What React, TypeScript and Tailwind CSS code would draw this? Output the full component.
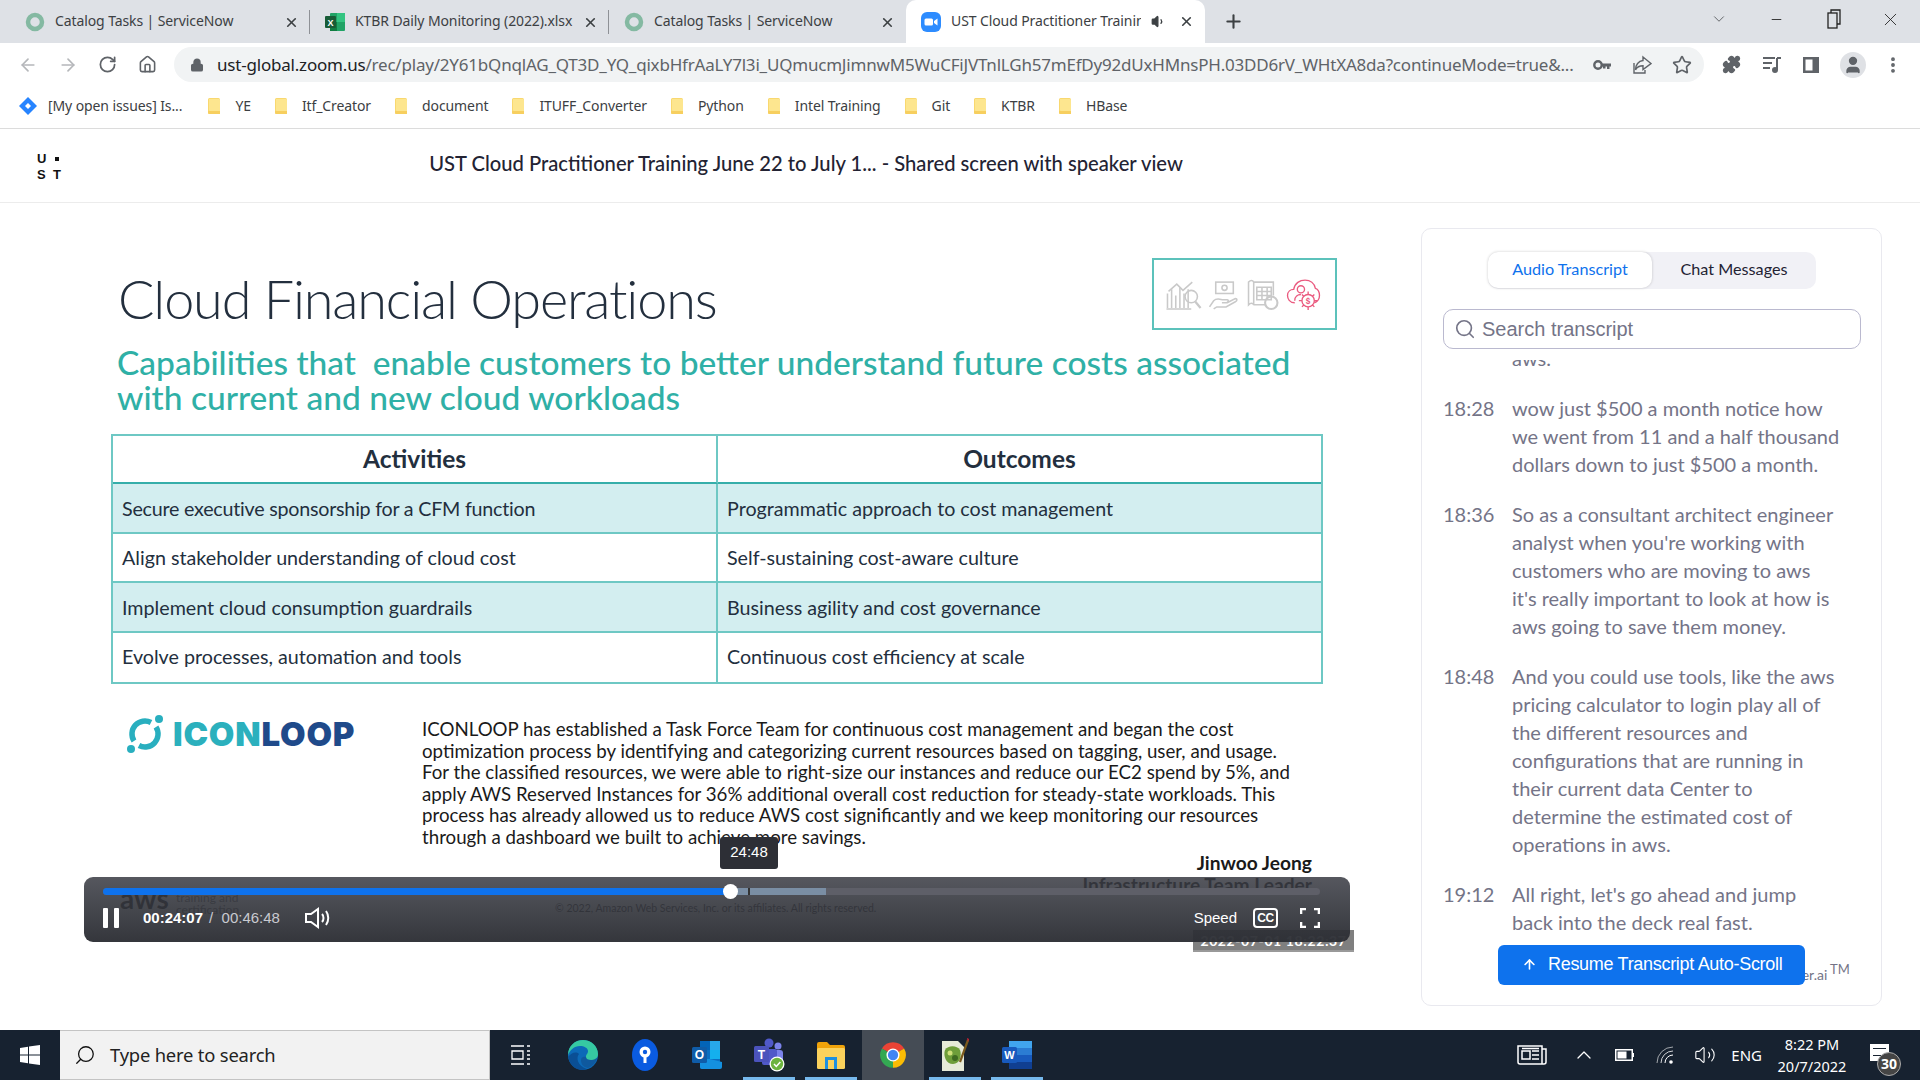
import React from "react";
import { ArrowLeft, ArrowRight, RotateCw, Home, Lock, Star, Puzzle, MoreVertical, X, Plus, ChevronDown, Minus, Volume1, Volume2, ChevronUp, Search, ArrowUp, User } from "lucide-react";

const Snow = () => (
  <svg width="20" height="20" viewBox="0 0 20 20" className="shrink-0">
    <circle cx="10" cy="10" r="7" fill="none" stroke="#84b9a2" strokeWidth="4.5" />
  </svg>
);
const Excel = () => (
  <svg width="20" height="20" viewBox="0 0 20 20" className="shrink-0">
    <rect x="5" y="1" width="15" height="18" rx="1" fill="#21a366" />
    <rect x="12" y="1" width="8" height="9" fill="#33c481" />
    <rect x="5" y="10" width="7" height="9" fill="#107c41" />
    <rect x="0" y="4" width="11" height="12" rx="1" fill="#185c37" />
    <text x="5.5" y="13.5" fontSize="9" fontWeight="700" fill="#fff" textAnchor="middle" fontFamily="Liberation Sans">X</text>
  </svg>
);
const ZoomFav = () => (
  <svg width="20" height="20" viewBox="0 0 20 20" className="shrink-0">
    <rect x="0" y="0" width="20" height="20" rx="6" fill="#2d8cff" />
    <rect x="3.5" y="6.5" width="8.5" height="7" rx="1.5" fill="#fff" />
    <path d="M13 9l3.5-2.5v7L13 11z" fill="#fff" />
  </svg>
);
const Tab = ({ w, icon, title, tw, active, sound, sep }: { w: string; icon: React.ReactNode; title: string; tw: string; active?: boolean; sound?: boolean; sep?: boolean }) => (
  <div className={`relative flex items-center shrink-0 pl-[15px] ${w} ${active ? "bg-white rounded-t-[10px] h-[43px]" : "h-[41px] mt-[1px]"}`}>
    {icon}
    <div className={`ml-[10px] pb-[1px] overflow-hidden whitespace-nowrap text-[14px] leading-[20px] text-[#3c4043] tracking-[-0.1px] ${tw}`}>{title}</div>
    {sound && <Volume1 size={15} className="absolute right-[39px] top-[14px] text-[#3c4043]" fill="#3c4043" />}
    <X size={15} strokeWidth={2.6} className="absolute right-[11px] top-[14px] text-[#3c4043]" />
    {sep && <div className="absolute right-0 top-[9px] h-[24px] w-px bg-[#8e9196]" />}
  </div>
);
const Folder = () => (
  <svg width="16" height="20" viewBox="0 0 16 20" className="shrink-0">
    <path d="M1 3.5A1.5 1.5 0 0 1 2.5 2h9A1.5 1.5 0 0 1 13 3.5V18H2.5A1.5 1.5 0 0 1 1 16.5z" fill="#f9d86f" />
    <path d="M2 3h10a1 1 0 0 1 1 1v11H3a1 1 0 0 1-1-1z" fill="#fde68f" />
    <path d="M1 15h12v3H2.500A1.500 1.500 0 0 1 1 16.500z" fill="#f7cf5f" />
  </svg>
);
const Bm = ({ t }: { t: string }) => (
  <div className="flex items-center gap-[12px] mr-[23px]">
    <Folder />
    <span className="text-[14px] leading-[20px] text-[#3c4043] tracking-[-0.1px] whitespace-nowrap">{t}</span>
  </div>
);
const iconGray = "text-[#5f6368]";

const Cell = ({ children, fill, tight, drop }: { children: string; fill?: boolean; tight?: boolean; drop?: boolean }) => (
  <div className={`flex items-center h-full pl-[9px] text-[19.700px] text-[#232f3e] whitespace-nowrap ${fill ? "bg-[#d3eef0]" : ""} ${tight ? "tracking-[-0.23px]" : ""} ${drop ? "pt-[2px]" : ""}`}>{children}</div>
);
const rows = [
  ["Secure executive sponsorship for a CFM function", "Programmatic approach to cost management"],
  ["Align stakeholder understanding of cloud cost", "Self-sustaining cost-aware culture"],
  ["Implement cloud consumption guardrails", "Business agility and cost governance"],
  ["Evolve processes, automation and tools", "Continuous cost efficiency at scale"],
];
const para = [
  "ICONLOOP has established a Task Force Team for continuous cost management and began the cost",
  "optimization process by identifying and categorizing current resources based on tagging, user, and usage.",
  "For the classified resources, we were able to right-size our instances and reduce our EC2 spend by 5%, and",
  "apply AWS Reserved Instances for 36% additional overall cost reduction for steady-state workloads. This",
  "process has already allowed us to reduce AWS cost significantly and we keep monitoring our resources",
  "through a dashboard we built to achieve more savings.",
];
const transcript: [string, string[]][] = [
  ["", ["aws."]],
  ["18:28", ["wow just $500 a month notice how", "we went from 11 and a half thousand", "dollars down to just $500 a month."]],
  ["18:36", ["So as a consultant architect engineer", "analyst when you're working with", "customers who are moving to aws", "it's really important to look at how is", "aws going to save them money."]],
  ["18:48", ["And you could use tools, like the aws", "pricing calculator to login play all of", "the different resources and", "configurations that are running in", "their current data Center to", "determine the estimated cost of", "operations in aws."]],
  ["19:12", ["All right, let's go ahead and jump", "back into the deck real fast."]],
];

const Chrome = () => (
  <svg width="28" height="28" viewBox="0 0 24 24">
    <path d="M12 12L2.47 6.5A11 11 0 0 1 21.53 6.5Z" fill="#ea4335" />
    <path d="M12 12L21.53 6.5A11 11 0 0 1 12 23Z" fill="#fbbc04" />
    <path d="M12 12L12 23A11 11 0 0 1 2.47 6.5Z" fill="#34a853" />
    <circle cx="12" cy="12" r="5.6" fill="#fff" />
    <circle cx="12" cy="12" r="4.4" fill="#4285f4" />
  </svg>
);
const Edge = () => (
  <svg width="32" height="32" viewBox="0 0 32 32">
    <circle cx="16" cy="16" r="15" fill="#0c6ab8" />
    <path d="M1 16C1 7 8 1 16 1c8 0 15 6 15 14 0 4-3 6-7 6-3 0-5-1-5-3 0-3 2-3 2-6 0-3-4-5-8-5C7 7 3 11 1 16z" fill="#36c9a2" />
    <path d="M12 15c-3 3-2 12 8 15-2 1-3 1-5 1C8 31 3 26 1 18c3-4 8-6 11-3z" fill="#0a4f95" />
    <path d="M19 18c0 2 2 3 5 3 2 0 4-1 6-2-1 4-4 8-9 10-5-1-7-4-7-8 0-2 2-4 5-3z" fill="#163a6c" opacity="0.35" />
  </svg>
);
const Pin = () => (
  <svg width="28" height="32" viewBox="0 0 28 32">
    <ellipse cx="14" cy="16" rx="13" ry="16" fill="#0a5be0" />
    <circle cx="14" cy="13" r="5.500" fill="#fff" />
    <circle cx="14" cy="13" r="2.200" fill="#0a5be0" />
    <rect x="12.500" y="17" width="3" height="7" fill="#fff" />
  </svg>
);
const Outlook = () => (
  <svg width="30" height="28" viewBox="0 0 30 28">
    <rect x="8" y="0" width="20" height="28" rx="2" fill="#0a6fc2" />
    <rect x="8" y="0" width="10" height="9" fill="#0364b8" />
    <rect x="18" y="0" width="10" height="9" fill="#28a8ea" />
    <rect x="18" y="9" width="10" height="9" fill="#14b0ee" />
    <path d="M8 18l10 0 12 3v5a2 2 0 0 1-2 2H10a2 2 0 0 1-2-2z" fill="#1490df" />
    <rect x="0" y="6" width="15" height="16" rx="1.500" fill="#0f5ca8" />
    <text x="7.500" y="18" fontSize="12" fontWeight="700" fill="#fff" textAnchor="middle" fontFamily="Liberation Sans">O</text>
  </svg>
);
const Teams = () => (
  <svg width="32" height="34" viewBox="0 0 32 34">
    <circle cx="16" cy="5" r="4.500" fill="#5059c9" />
    <circle cx="25" cy="8" r="3.500" fill="#7b83eb" />
    <rect x="20" y="12" width="10" height="12" rx="3" fill="#7b83eb" />
    <rect x="9" y="11" width="15" height="16" rx="2" fill="#5059c9" />
    <rect x="1" y="8" width="15" height="16" rx="1.500" fill="#4b53bc" />
    <text x="8.500" y="21" fontSize="12" fontWeight="700" fill="#fff" textAnchor="middle" fontFamily="Liberation Sans">T</text>
    <circle cx="24" cy="26" r="7.500" fill="#fff" />
    <circle cx="24" cy="26" r="6.200" fill="#6cb33f" />
    <path d="M21 26l2.300 2.500 4-4.500" stroke="#fff" strokeWidth="1.500" fill="none" />
  </svg>
);
const Files = () => (
  <svg width="30" height="28" viewBox="0 0 30 28">
    <path d="M1 3a2 2 0 0 1 2-2h8l3 3h13a2 2 0 0 1 2 2v6H1z" fill="#f0a30a" />
    <rect x="1" y="7" width="28" height="21" rx="1.500" fill="#fbd25c" />
    <rect x="9" y="16" width="12" height="12" fill="#1e90e0" />
    <rect x="12" y="19" width="6" height="9" fill="#fbd25c" />
  </svg>
);
const Chart = () => (
  <svg width="30" height="34" viewBox="0 0 30 34">
    <path d="M2 3h16l6 6v24H2z" fill="#e6ead8" />
    <path d="M5 12c3-5 12-5 15 0 2 5 0 14-7 14S3 18 5 12z" fill="#6e9e3a" />
    <circle cx="10" cy="15" r="2.500" fill="#cfe07a" />
    <circle cx="15" cy="20" r="3" fill="#3f6b22" />
    <path d="M20 24L28 2" stroke="#7b5a1d" strokeWidth="2.200" />
    <path d="M27 0l2 1-1 3z" fill="#d23" />
  </svg>
);
const Word = () => (
  <svg width="30" height="28" viewBox="0 0 30 28">
    <rect x="7" y="0" width="23" height="28" rx="2" fill="#2b7cd3" />
    <rect x="7" y="0" width="23" height="7" fill="#41a5ee" />
    <rect x="7" y="14" width="23" height="7" fill="#185abd" />
    <rect x="7" y="21" width="23" height="7" fill="#103f91" />
    <rect x="0" y="6" width="15" height="16" rx="1.500" fill="#185abd" />
    <text x="7.500" y="18" fontSize="11" fontWeight="700" fill="#fff" textAnchor="middle" fontFamily="Liberation Sans">W</text>
  </svg>
);
const Slot = ({ children, active, line }: { children: React.ReactNode; active?: boolean; line?: boolean }) => (
  <div className={`relative flex items-center justify-center w-[62px] h-full shrink-0 ${active ? "bg-[#454c55]" : ""}`}>
    {children}
    {line && <div className="absolute bottom-0 left-[5px] right-[5px] h-[3px] bg-[#76b9ed]" />}
  </div>
);

const FinIcons = () => (
  <div className="flex items-center gap-[6px] mr-[3px] mt-[2px]">
    <svg width="37" height="31" viewBox="0 0 35 30" fill="none" stroke="#c9c9c9" strokeWidth="1.500">
      <path d="M2 28V14M6 28V10M10 28V16M14 28V8M18 28V14M22 28V10M1 29h24" />
      <path d="M3 12l8-7 6 6 9-8" />
      <circle cx="25" cy="17" r="6" /><path d="M29 22l5 6" strokeWidth="2.200" />
    </svg>
    <svg width="32" height="31" viewBox="0 0 30 30" fill="none" stroke="#c9c9c9" strokeWidth="1.500">
      <rect x="7" y="3" width="17" height="11" /><circle cx="15.500" cy="8.500" r="2.500" />
      <path d="M1 27l4-6c3-3 7-1 9-1h4c2 0 1 3-1 3h-4m5 0l8-4c2 0 2 2 0 3l-9 5H8l-3 2" />
    </svg>
    <svg width="34" height="31" viewBox="0 0 32 30" fill="none" stroke="#c9c9c9" strokeWidth="1.500">
      <path d="M2 3c2-2 4-2 5 0v22c-1-2-3-2-5 0zM7 3h19v13M7 25h12" />
      <path d="M10 8h14v12H10zM10 12h14M10 16h14M15 8v12M20 8v12" />
      <circle cx="24" cy="23" r="6" strokeWidth="2" />
    </svg>
    <svg width="35" height="33" viewBox="0 0 33 32" fill="none" stroke="#ea5a7f" strokeWidth="1.300">
      <path d="M8 24C3 24 1 20 1 17c0-4 3-6 6-6 1-6 6-9 11-9 5 0 9 3 10 8 3 1 4 4 4 7 0 3-2 6-5 7" />
      <circle cx="14" cy="11" r="3.500" /><path d="M8 22c0-4 3-6 6-6" />
      <circle cx="21" cy="22" r="6" /><path d="M21 13v3M21 28v3M12 22h3M27 22h3M15 16l2 2M25 26l2 2M27 16l-2 2M17 26l-2 2" />
      <text x="21" y="25.500" fontSize="8" fontWeight="700" fill="#ea5a7f" stroke="none" textAnchor="middle" fontFamily="Liberation Sans">$</text>
    </svg>
  </div>
);

export default function App() {
  return (
    <div className="w-[1920px] h-[1080px] flex flex-col overflow-hidden bg-white font-['Noto_Sans',sans-serif]">
      {/* tab strip */}
      <div className="flex h-[43px] shrink-0 bg-[#dee1e6] items-start pl-[10px]">
        <Tab w="w-[300px]" icon={<Snow />} title="Catalog Tasks | ServiceNow" tw="w-[200px]" sep />
        <Tab w="w-[299px]" icon={<Excel />} title="KTBR Daily Monitoring (2022).xlsx" tw="w-[220px]" sep />
        <Tab w="w-[297px]" icon={<Snow />} title="Catalog Tasks | ServiceNow" tw="w-[200px]" />
        <Tab w="w-[299px]" icon={<ZoomFav />} title="UST Cloud Practitioner Training June 22" tw="w-[190px]" active sound />
        <div className="flex items-center h-[43px] ml-[18px]"><Plus size={21} strokeWidth={2.4} className="text-[#3c4043]" /></div>
        <div className="flex-1" />
        <div className="flex items-center h-[38px]">
          <ChevronDown size={18} strokeWidth={1} className="text-[#3c4043] mr-[41px]" />
          <Minus size={15} strokeWidth={1.4} className="text-[#222] mr-[43px]" />
          <svg width="14" height="20" viewBox="0 0 14 20" fill="none" stroke="#222" strokeWidth="1.300" className="mr-[39px]"><rect x="1" y="4" width="9" height="15" /><path d="M4 4V1h9v14h-3" /></svg>
          <X size={21} strokeWidth={1} className="text-[#222] mr-[19px]" />
        </div>
      </div>
      {/* toolbar */}
      <div className="flex items-center h-[43px] shrink-0 bg-white">
        <ArrowLeft size={20} className="text-[#b5b7ba] ml-[18px]" />
        <ArrowRight size={20} className="text-[#b5b7ba] ml-[20px]" />
        <RotateCw size={19} strokeWidth={2.2} className={`${iconGray} ml-[20px]`} />
        <Home size={19} strokeWidth={2} className={`${iconGray} ml-[21px]`} />
        <div className="flex items-center ml-[17px] w-[1530px] h-[35px] bg-[#f1f3f4] rounded-full pl-[16px]">
          <Lock size={14} strokeWidth={2.6} className={iconGray} fill="#5f6368" />
          <div className="ml-[13px] w-[1358px] overflow-hidden whitespace-nowrap text-[17px] leading-[24px] tracking-[-0.2px]">
            <span className="text-[#202124]">ust-global.zoom.us</span>
            <span className="text-[#5f6368]">/rec/play/2Y61bQnqlAG_QT3D_YQ_qixbHfrAaLY7l3i_UQmucmJimnwM5WuCFiJVTnlLGh57mEfDy92dUxHMnsPH.03DD6rV_WHtXA8da?continueMode=true&amp;...</span>
          </div>
          <svg width="18" height="12" viewBox="0 0 18 12" className="ml-[18px]"><circle cx="5" cy="6" r="3.700" fill="none" stroke="#5f6368" strokeWidth="2.400" /><path d="M8 4.600h10v3h-1.500v2.400h-2.500V7.600h-1.500v1.800h-2.500V7.600H8z" fill="#5f6368" /></svg>
          <svg width="20" height="20" viewBox="0 0 20 20" fill="none" stroke="#5f6368" strokeWidth="1.400" className="ml-[21px]"><path d="M2 8v10h11v-3" /><path d="M11 2l8 6.500-8 6v-3.700c-3.500 0-6 1.200-7.500 4 0-5 3-8.800 7.500-9.300z" /></svg>
          <Star size={20} className={`${iconGray} ml-[20px]`} />
        </div>
        <Puzzle size={19} className={`${iconGray} ml-[18px]`} fill="#5f6368" />
        <svg width="20" height="18" viewBox="0 0 20 18" fill="none" stroke="#5f6368" strokeWidth="2" className="ml-[21px]"><path d="M1 2h12M1 7h9M1 12h7" /><path d="M15 2v12" /><circle cx="13" cy="14" r="2" fill="#5f6368" /><path d="M15 2h4" /></svg>
        <svg width="18" height="18" viewBox="0 0 18 18" className="ml-[20px]"><rect x="1" y="1" width="16" height="16" fill="#5f6368" /><rect x="3.500" y="3.500" width="7" height="11" fill="#fff" /></svg>
        <div className="ml-[20px] w-[26px] h-[26px] rounded-full bg-[#dfe1e5] flex items-center justify-center overflow-hidden">
          <User size={20} fill="#5f6368" className={iconGray} />
        </div>
        <MoreVertical size={20} strokeWidth={2.6} className={`${iconGray} ml-[17px]`} />
      </div>
      {/* bookmarks */}
      <div className="flex items-center h-[43px] shrink-0 border-b border-[#dcdcdc] pl-[18px] pb-[3px]">
        <svg width="20" height="20" viewBox="0 0 20 20" className="shrink-0"><path d="M10 1l9 9-9 9-9-9z" fill="#2684ff" /><path d="M10 7l3 3-3 3-3-3z" fill="#fff" /></svg>
        <span className="ml-[10px] mr-[25px] text-[14px] leading-[20px] text-[#3c4043] tracking-[-0.1px]">[My open issues] Is...</span>
        <Bm t="YE" />
        <Bm t="Itf_Creator" />
        <Bm t="document" />
        <Bm t="ITUFF_Converter" />
        <Bm t="Python" />
        <Bm t="Intel Training" />
        <Bm t="Git" />
        <Bm t="KTBR" />
        <Bm t="HBase" />
      </div>
      {/* page header */}
      <div className="relative flex items-center justify-center h-[74px] shrink-0 border-b border-[#ececec] font-['Lato',sans-serif] pb-[5px]">
        <div className="absolute left-[37px] top-[22px] grid grid-cols-2 w-[24px] gap-y-[1px] text-[13px] leading-[15px] font-bold text-[#111] font-['Liberation_Sans',sans-serif]">
          <span>U</span><span className="flex items-center pl-[6px]"><span className="w-[4px] h-[4px] bg-[#111]" /></span>
          <span>S</span><span className="pl-[4px]">T</span>
        </div>
        <div className="ml-[-308px] text-[20.200px] font-medium text-[#232333] whitespace-nowrap">UST Cloud Practitioner Training June 22 to July 1... - Shared screen with speaker view</div>
      </div>
      {/* main */}
      <div className="flex-1 flex min-h-0">
        <div className="relative w-[1421px] shrink-0 font-['Lato',sans-serif] text-[#232f3e]">
          <div className="flex items-start pt-[55px] pl-[118px]">
            <div className="text-[54px] leading-[60px] font-light tracking-[-1.150px] text-[#232f3e] mt-[11px] whitespace-nowrap w-[1034px]">Cloud Financial Operations</div>
            <div className="flex items-center justify-center w-[185px] h-[72px] border-2 border-[#5cc2bb] pb-[2px]"><FinIcons /></div>
          </div>
          <div className="ml-[117px] mt-[15px] text-[33.500px] leading-[35px] font-medium text-[#2fb0a6] whitespace-pre">{"Capabilities that  enable customers to better understand future costs associated\nwith current and new cloud workloads"}</div>
          {/* table */}
          <div className="ml-[111px] mt-[19px] w-[1212px] border-2 border-[#6ec8c4] grid grid-cols-[605px_1fr] grid-rows-[48px_repeat(4,49.5px)]">
            <div className="flex items-center justify-center border-r-2 border-[#6ec8c4] border-b-2 border-b-[#35aeaa] text-[24.500px] font-bold text-[#232f3e]">Activities</div>
            <div className="flex items-center justify-center border-b-2 border-b-[#35aeaa] text-[24.500px] font-bold text-[#232f3e]">Outcomes</div>
            {rows.map((r, i) => (
              <React.Fragment key={i}>
                <div className={`border-r-2 border-[#6ec8c4] ${i < 3 ? "border-b-2 border-b-[#6ec8c4]" : ""}`}><Cell fill={i % 2 === 0} tight={i === 0} drop={i < 3}>{r[0]}</Cell></div>
                <div className={`${i < 3 ? "border-b-2 border-b-[#6ec8c4]" : ""}`}><Cell fill={i % 2 === 0} drop={i < 3}>{r[1]}</Cell></div>
              </React.Fragment>
            ))}
          </div>
          {/* quote */}
          <div className="flex mt-[30px] ml-[126px]">
            <div className="flex items-start w-[296px] shrink-0">
              <svg width="38" height="40" viewBox="0 0 38 40" fill="none" className="shrink-0">
                <path d="M8 27A13 13 0 0 1 25 8.500" stroke="#29afbf" strokeWidth="5.500" />
                <path d="M30 13A13 13 0 0 1 13 31.500" stroke="#29afbf" strokeWidth="5.500" />
                <circle cx="33" cy="5" r="4" fill="#29afbf" /><circle cx="5" cy="35" r="4" fill="#29afbf" />
              </svg>
              <div className="ml-[9px] mt-[2px] text-[33px] leading-[36px] font-black tracking-[0.8px] font-['Inter',sans-serif] whitespace-nowrap">
                <span className="text-[#2bb0bd]">ICON</span><span className="text-[#1f4a8a]">LOOP</span>
              </div>
            </div>
            <div className="text-[18.700px] leading-[21.6px] text-[#1a1a1a] whitespace-nowrap mt-[5px]">
              {para.map((l) => <div key={l}>{l}</div>)}
            </div>
          </div>
          <div className="w-[1312px] text-right font-bold text-[19.200px] leading-[22px] mt-[3px] text-[#1a1a1a]">Jinwoo Jeong</div>
          <div className="w-[1312px] text-right font-bold text-[19.200px] leading-[22px] text-[#111]">Infrastructure Team Leader</div>
          {/* footer behind control bar */}
          <div className="absolute left-[120px] top-[680px] text-[28px] leading-[30px] font-bold text-[#111]">aws</div>
          <div className="absolute left-[176px] top-[689px] text-[12px] leading-[12px] text-[#666]">training and<br />certification</div>
          <div className="absolute left-[555px] top-[699px] text-[10.500px] leading-[12px] text-[#333] whitespace-nowrap">© 2022, Amazon Web Services, Inc. or its affiliates. All rights reserved.</div>
          <div className="absolute left-[1193px] top-[727px] w-[161px] h-[22px] bg-[#7f7f7f] border-b-2 border-[#999] text-white text-[14px] leading-[22px] text-center font-bold tracking-[0.6px] whitespace-nowrap">2022-07-01 18:22:37</div>
          {/* tooltip */}
          <div className="absolute left-[720px] top-[634px] w-[58px] h-[32px] rounded-[3px] bg-[#2d2f36] text-white text-[15px] leading-[30px] text-center font-['Liberation_Sans',sans-serif]">24:48</div>
          {/* player */}
          <div className="absolute left-[84px] top-[674px] w-[1266px] h-[65px] rounded-[9px] bg-[linear-gradient(180deg,rgba(58,60,68,0.86),rgba(44,46,52,0.96))] font-['Liberation_Sans',sans-serif]">
            <div className="relative flex mx-[19px] mt-[11px] h-[7px] w-[1217px] rounded-full bg-[#5e5f68]">
              <div className="w-[628px] bg-[#0e72ed] rounded-l-full" />
              <div className="w-[95px] bg-[#7a8ea4]" />
              <div className="absolute left-[645px] top-0 w-[2px] h-[7px] bg-[#333]" />
              <div className="absolute left-[620px] top-[-4px] w-[15px] h-[15px] rounded-full bg-white" />
            </div>
            <div className="flex items-center mt-[13px] pl-[19px] h-[20px] text-[15px]">
              <div className="flex gap-[6px]"><div className="w-[5px] h-[20px] rounded-[1px] bg-white" /><div className="w-[5px] h-[20px] rounded-[1px] bg-white" /></div>
              <span className="ml-[24px] text-white font-bold">00:24:07</span>
              <span className="ml-[6px] text-[#c9cad0] whitespace-pre">/  00:46:48</span>
              <Volume1Icon />
              <div className="flex-1" />
              <span className="text-white mr-[16px]">Speed</span>
              <div className="flex items-center justify-center w-[25px] h-[20px] border-2 border-white rounded-[4px] text-white text-[12px] font-bold leading-none tracking-[-0.5px]">CC</div>
              <svg width="20" height="20" viewBox="0 0 20 20" fill="none" stroke="#fff" strokeWidth="2.600" className="ml-[22px] mr-[30px]"><path d="M1 6V1h5M14 1h5v5M19 14v5h-5M6 19H1v-5" /></svg>
            </div>
          </div>
        </div>
        {/* transcript panel */}
        <div className="relative mt-[25px] w-[461px] h-[778px] shrink-0 border border-[#e9e9ef] rounded-[10px] font-['Lato',sans-serif] overflow-hidden">
          <div className="flex mt-[23px] ml-[66px] w-[328px] h-[37px] rounded-[10px] bg-[#f1f1f6] text-[16.200px]">
            <div className="flex items-center justify-center w-[164px] h-[36px] pb-[1px] bg-white rounded-[10px] shadow-[0_0_3px_rgba(0,0,0,0.2)] text-[#0e72ed]">Audio Transcript</div>
            <div className="flex items-center justify-center flex-1 pb-[2px] text-[#232333]">Chat Messages</div>
          </div>
          <div className="flex items-center mt-[20px] ml-[21px] w-[418px] h-[40px] rounded-[10px] border border-[#bab9cf] pl-[10px] font-['Liberation_Sans',sans-serif]">
            <Search size={22} strokeWidth={1.8} className="text-[#747487] shrink-0" />
            <span className="ml-[6px] text-[20px] text-[#747487]">Search transcript</span>
          </div>
          <div className="mt-[11px] h-[580px] overflow-hidden">
            <div className="mt-[-16px] pl-[21px] flex flex-col gap-[22px] text-[20px] leading-[28px] text-[#747487]">
              {transcript.map(([t, lines]) => (
                <div key={t} className="flex">
                  <div className="w-[69px] shrink-0">{t}</div>
                  <div className="whitespace-nowrap">{lines.map((l) => <div key={l}>{l}</div>)}</div>
                </div>
              ))}
            </div>
          </div>
          <div className="absolute left-[359px] top-[738px] text-[14px] leading-[16px] text-[#747487] whitespace-nowrap"><span>Otter.ai</span></div>
          <div className="absolute left-[408px] top-[732px] text-[13px] leading-[16px] text-[#747487]">TM</div>
          <div className="absolute left-[76px] top-[716px] flex items-center w-[307px] h-[40px] pb-[1px] rounded-[6px] bg-[#0e72ed] text-white font-['Liberation_Sans',sans-serif] pl-[24px]">
            <ArrowUp size={15} strokeWidth={2.6} />
            <span className="ml-[11px] text-[18px] tracking-[-0.3px] whitespace-nowrap">Resume Transcript Auto-Scroll</span>
          </div>
        </div>
      </div>
      {/* taskbar */}
      <div className="flex items-center h-[50px] shrink-0 bg-[#172230]">
        <div className="flex items-center justify-center w-[60px] h-full">
          <svg width="20" height="20" viewBox="0 0 20 20" fill="#fff"><path d="M0 3l8-1.200V9.500H0zM9 1.600L20 0v9.500H9zM0 10.500h8v7.700L0 17zM9 10.500h11V20L9 18.400z" /></svg>
        </div>
        <div className="flex items-center w-[430px] h-full bg-[#f2f2f2] border border-[#c4c4c4] border-l-0 pl-[14px]">
          <Search size={22} strokeWidth={1.4} className="text-[#111] -scale-x-100" />
          <span className="ml-[14px] text-[18.400px] text-[#222] tracking-[-0.2px] whitespace-nowrap">Type here to search</span>
        </div>
        <div className="flex items-center justify-center w-[62px] h-full">
          <svg width="20" height="20" viewBox="0 0 20 20" fill="none" stroke="#fff" strokeWidth="1.300"><path d="M0 1h13M0 19h13M1 6h11v8H1zM16 1h3M16 6h3M16 10h3M16 14h3M16 19h3" /></svg>
        </div>
        <Slot><Edge /></Slot>
        <Slot><Pin /></Slot>
        <Slot><Outlook /></Slot>
        <Slot line><Teams /></Slot>
        <Slot line><Files /></Slot>
        <Slot active><Chrome /></Slot>
        <Slot line><Chart /></Slot>
        <Slot line><Word /></Slot>
        <div className="flex-1" />
        <div className="flex items-center h-full text-white">
          <svg width="30" height="20" viewBox="0 0 30 20" fill="none" stroke="#fff" strokeWidth="1.500"><path d="M1 1h24v18H3a2 2 0 0 1-2-2zM25 4h4v13a2 2 0 0 1-2 2h-2" /><rect x="5" y="6" width="8" height="8" /><path d="M15 6h7M15 10h7M15 14h7M5 3.500h17" /></svg>
          <ChevronUp size={24} strokeWidth={1.3} className="ml-[25px]" />
          <svg width="19" height="12" viewBox="0 0 19 12" className="ml-[19px]"><rect x="0.750" y="0.750" width="16.500" height="10.500" fill="none" stroke="#fff" strokeWidth="1.500" /><rect x="2.500" y="2.500" width="9" height="7" fill="#fff" /><rect x="17.500" y="4" width="1.500" height="4" fill="#fff" /></svg>
          <svg width="18" height="18" viewBox="0 0 18 18" fill="none" stroke="#fff" strokeWidth="1" className="ml-[22px]"><path d="M1 17A16 16 0 0 1 17 1" opacity="0.6" /><path d="M5 17A12 12 0 0 1 17 5" opacity="0.8" /><path d="M9 17a8 8 0 0 1 8-8" /><circle cx="15" cy="16" r="1.800" fill="#fff" stroke="none" /></svg>
          <Volume2 size={22} strokeWidth={1.2} className="ml-[20px]" />
          <span className="ml-[15px] text-[15px]">ENG</span>
          <div className="ml-[13px] w-[74px] text-center text-[14.500px] leading-[22px] whitespace-nowrap"><div>8:22 PM</div><div>20/7/2022</div></div>
          <div className="relative ml-[21px] mr-[31px] w-[19px] h-[17px] bg-white mt-[-6px]">
            <div className="mx-[3px] mt-[4px] h-[8px] border-y border-[#172230]" />
            <div className="absolute left-[7px] top-[8px] w-[24px] h-[24px] rounded-full bg-[#454545] border border-[#aaa] text-[14px] leading-[22px] text-center font-bold text-white">30</div>
          </div>
        </div>
      </div>
    </div>
  );
}

function Volume1Icon() {
  return (
    <svg width="28" height="22" viewBox="0 0 28 22" fill="none" stroke="#fff" strokeWidth="2" className="ml-[24px]">
      <path d="M2 7h5l7-5v18l-7-5H2z" />
      <path d="M18 7c2 2 2 6 0 8M22 4c3 4 3 10 0 14" />
    </svg>
  );
}
